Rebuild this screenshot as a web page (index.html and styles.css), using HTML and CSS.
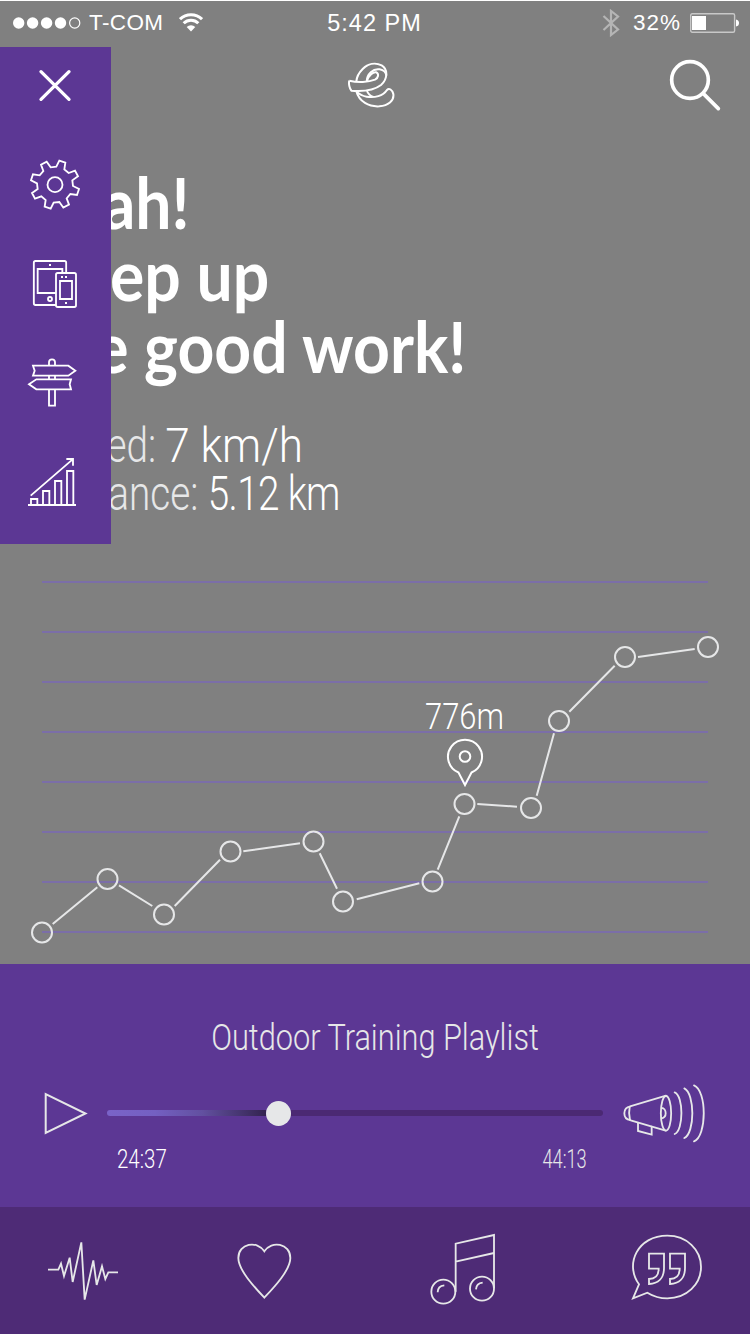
FILE: index.html
```html
<!DOCTYPE html>
<html lang="en">
<head>
    <meta charset="UTF-8">
    <meta name="viewport" content="width=device-width, initial-scale=1.0">
    <title>Training</title>
    <link rel="stylesheet" href="styles.css">
</head>
<body>
    <div class="app">
        <div class="status">
            <div class="status-left">
                <svg class="signal" width="68" height="12" viewBox="0 0 68 12">
                    <circle cx="5.7" cy="6" r="5.7"/><circle cx="19.6" cy="6" r="5.7"/><circle cx="33.6" cy="6" r="5.7"/><circle cx="47.5" cy="6" r="5.7"/>
                    <circle class="empty" cx="61.7" cy="6" r="5.1"/>
                </svg>
                <span class="carrier">T-COM</span>
                <svg class="wifi" width="24" height="19" viewBox="0 0 24 19">
                    <path d="M1 6.2a15.6 15.6 0 0 1 22 0M4.7 10.2a10.3 10.3 0 0 1 14.6 0"/>
                    <path class="tip" d="M12 18.5L7.7 14a6.2 6.2 0 0 1 8.6 0z"/>
                </svg>
            </div>
            <span class="time">5:42 PM</span>
            <div class="status-right">
                <svg class="bluetooth" width="18" height="28" viewBox="0 0 18 28"><path d="M1.5 7L16 20.500L9 26V2l7 5.500L1.500 21"/></svg>
                <span class="percent">32%</span>
                <svg class="battery" width="49" height="20" viewBox="0 0 49 20">
                    <rect class="case" x=".7" y=".7" width="43.900" height="18.600" rx="1.500"/>
                    <rect x="2" y="3" width="14" height="14"/>
                    <path d="M46 6.500q3 .5 3 3.500t-3 3.500z"/>
                </svg>
            </div>
        </div>

        <header class="header">
            <svg class="logo" width="48" height="46" viewBox="80 185 144 138">
                <path d="M87 241C84 250 88 264 93 271C130 274 160 271 182 254C203 236 203 206 184 195C165 186 143 190 127 206C115 218 109 231 108 243"/>
                <path d="M87 241C111 247 145 246 164 238C175 232 176 220 168 216C159 214 145 224 139 243"/>
                <path d="M139 243C140 221 158 204 178 207C190 209 197 216 198 226"/>
                <path d="M108 273C116 304 146 320 177 318C203 315 222 302 219 281C216 268 206 262 200 269C188 287 163 293 139 289C127 287 116 281 108 273M140 272Q145 285 159 290"/>
            </svg>
            <svg class="search" width="52" height="53" viewBox="1047 177 156 159">
                <circle cx="1110" cy="240" r="55"/><path d="M1150 281L1195 326"/>
            </svg>
        </header>

        <aside class="drawer">
            <svg class="close" width="111" height="83" viewBox="0 141 333 249"><path d="M123 215L207 298M207 215L123 298"/></svg>
            <svg width="111" height="103" viewBox="0 0 333 309">
                <path d="M169 110L178 92L196 98L193 118L206 129L225 122L234 139L217 151L219 168L237 177L231 195L211 192L200 205L207 224L190 233L178 216L161 218L152 236L134 230L137 210L124 199L105 206L96 189L113 177L111 160L93 151L99 133L119 136L130 123L123 104L140 95L152 112z"/>
                <circle cx="165" cy="164" r="22.500"/>
            </svg>
            <svg width="111" height="100" viewBox="0 309 333 300">
                <rect x="101.500" y="393" width="97" height="132" rx="5"/>
                <path d="M113 417H187V489H113z"/>
                <circle cx="150" cy="507" r="6"/>
                <rect class="front" x="168" y="429" width="60" height="102" rx="5"/>
                <path d="M180 453H216V507H180zM147 405h6M183 441h6M195 441h6M195 519h6"/>
            </svg>
            <svg width="111" height="100" viewBox="0 609 333 300">
                <path d="M147 706V697a9 9 0 0 1 18 0V706M147 738V747M165 738V747M147 780V827H165V780"/>
                <path d="M99 707H205L226 722L205 737H99L104 722zM213 748H109L87 763L109 778H213L209 763z"/>
            </svg>
            <svg width="111" height="111" viewBox="0 909 333 333">
                <path d="M84 1125H228M93 1125V1107H112V1125M129 1125V1083H148V1125M165 1125V1053H184V1125M201 1125V1023H220V1125M92 1097L218 988M199 987H219V1007"/>
            </svg>
        </aside>

        <section class="hero">
            <h1>
                <span class="line">Yeah!</span>
                <span class="line">Keep up</span>
                <span class="line">the good work!</span>
            </h1>
            <div class="stats">
                <p class="speed">Speed: <b>7 km/h</b></p>
                <p class="distance">Distance: <b>5.12 km</b></p>
            </div>
        </section>

        <svg class="chart" width="750" height="400" viewBox="0 564 750 400">
            <path class="grid" d="M42 582H708M42 632H708M42 682H708M42 732H708M42 782H708M42 832H708M42 882H708M42 932H708"/>
            <path class="route" d="M52.700 924L97.300 887.300M119 885.300L152.300 906M174.700 906L220 859.700M243.300 851.300L300 843.300M319.700 853.300L337 888.700M356.700 899.300L419.300 883.300M437.700 869.700L459.300 816.300M477.300 804L517 806.700M536.700 795.700L554 733.300M569.300 711.700L614.700 665.700M638 657L694.700 649"/>
            <g class="points">
                <circle cx="42" cy="932.500" r="10"/>
                <circle cx="107.500" cy="879" r="10"/>
                <circle cx="164" cy="914.500" r="10"/>
                <circle cx="230.500" cy="851.500" r="10"/>
                <circle cx="313.500" cy="841.500" r="10"/>
                <circle cx="343" cy="901.500" r="10"/>
                <circle cx="432.500" cy="881.500" r="10"/>
                <circle cx="464.500" cy="804" r="10"/>
                <circle cx="531" cy="808" r="10"/>
                <circle cx="559" cy="721" r="10"/>
                <circle cx="625" cy="657" r="10"/>
                <circle cx="708" cy="647" r="10"/>
            </g>
            <path class="pin" d="M465 785L458.500 772.500A17 17 0 1 1 471.500 772.500z"/>
            <circle class="pin" cx="465" cy="756.500" r="5.300"/>
            <text x="425" y="729" textLength="79" lengthAdjust="spacingAndGlyphs">776m</text>
        </svg>

        <section class="player">
            <h2>Outdoor Training Playlist</h2>
            <div class="controls">
                <svg class="play" width="44" height="44" viewBox="0 0 44 44"><path d="M1.700 3V42L41.500 22.500z"/></svg>
                <div class="track"><div class="played"></div><div class="knob"></div><div class="rest"></div></div>
                <svg class="volume" width="82" height="60" viewBox="744 370 246 180">
                    <path d="M765 440L873 408M767 482L872 513M766 440C754 442 748 448 748 461C748 472 754 480 766 481"/>
                    <path d="M764 442Q760 461 765 481"/>
                    <ellipse cx="873" cy="461" rx="15.500" ry="52"/>
                    <path d="M860 445C867 445 872 452 872 461S867 475 860 476M789 490V514L830 525V501M899 398C926 408 926 512 899 523M928 386C960 402 960 520 928 535M957 377C996 392 996 530 957 545"/>
                </svg>
            </div>
            <div class="times"><span>24:37</span><span class="total">44:13</span></div>
        </section>

        <nav class="tabs">
            <svg width="70" height="62" viewBox="144 120 210 186"><path d="M144 209H175L183 191L192 228L209 173L218 246L244 127L254 299L280 181L290 255L306 199L316 237L325 217H354"/></svg>
            <svg class="heart" width="55" height="58" viewBox="711 126 165 174"><path d="M793 154C772 120 715 130 715 174C715 210 763 261 793 293C823 261 871 210 871 174C871 130 814 120 793 154z"/></svg>
            <svg class="music" width="66" height="72" viewBox="163 98 198 216">
                <path d="M240 274V130L355 104V264M240 184L355 158M186 276Q186 257 206 255M301 267Q302 249 321 247"/>
                <circle cx="203" cy="274" r="36"/><circle cx="319" cy="265" r="36"/>
            </svg>
            <svg class="quote" width="72" height="66" viewBox="768 103 216 198">
                <path d="M792 254C748 193 788 108 877 108C935 108 978 150 978 202S935 296 877 296C855 296 835 290 817 279L774 296z"/>
                <path d="M822 162H867V205C867 235 850 252 822 253V238C841 238 851 227 851 207H822zM885 162H930V205C930 235 913 252 885 253V238C904 238 914 227 914 207H885z"/>
            </svg>
        </nav>
    </div>
</body>
</html>
```

FILE: styles.css
```css
* {
    box-sizing: border-box;
}
body {
    margin: 0;
    background-color: #808080;
    color: #fff;
    font-family: Roboto, "Open Sans", sans-serif;
}
svg {
    display: block;
    flex: none;
    fill: none;
    stroke: #fff;
}
.app {
    position: relative;
    width: 750px;
    height: 1334px;
    overflow: hidden;
    background-color: #808080;
}
.status {
    display: grid;
    grid-template-columns: 1fr auto 1fr;
    align-items: center;
    height: 47px;
    padding: 0 11px 3px 13px;
    border-top: 1px solid #fff;
    font: 22.5px "Liberation Sans", sans-serif;
    letter-spacing: 1px;
}
.status-left, .status-right {
    display: flex;
    align-items: center;
}
.status-right {
    justify-content: flex-end;
}
.signal, .wifi .tip, .battery {
    fill: #fff;
    stroke: none;
}
.signal .empty {
    fill: none;
    stroke: #fff;
    stroke-width: 1.2;
}
.carrier {
    margin: 0 15px 0 8px;
    letter-spacing: .4px;
}
.wifi {
    stroke-width: 3;
}
.time {
    margin: 1px 3px 0 0;
    font-size: 23.5px;
}
.bluetooth {
    margin-right: 13px;
    stroke: #b5b5b5;
    stroke-width: 2.2;
}
.percent {
    margin-right: 9px;
}
.battery .case {
    fill: none;
    stroke: #c8c8c8;
    stroke-width: 1.4;
}
.header {
    display: flex;
    justify-content: space-between;
    align-items: flex-start;
    height: 83px;
    padding: 12px 29px 0 347px;
}
.logo {
    margin-top: 3px;
    stroke-width: 6;
    stroke-linejoin: round;
}
.search {
    stroke-width: 11;
    stroke-linecap: round;
}
.drawer {
    position: absolute;
    top: 47px;
    left: 0;
    z-index: 2;
    width: 111px;
    height: 497px;
    background-color: #5c3794;
}
.drawer svg {
    stroke-width: 5.5;
}
.drawer .close {
    stroke-width: 10;
    stroke-linecap: round;
}
.drawer .front {
    fill: #5c3794;
}
.hero {
    height: 434px;
    padding: 36px 0 0 34px;
}
h1 {
    margin: 0;
    font: 700 70px/72px Lato, sans-serif;
}
.line, .stats p {
    display: block;
    width: max-content;
    transform-origin: left;
    white-space: nowrap;
}
.line {
    transform: scaleX(.918);
}
.stats {
    margin: 40px 0 0 8px;
}
.stats p {
    margin: 0;
    color: #e6e7e8;
    font-size: 49px;
    font-weight: 300;
    line-height: 48px;
    transform: scaleX(.79);
}
.stats b {
    color: #fff;
    font-weight: 300;
}
.speed b {
    display: inline-block;
    transform: scaleX(1.14);
    transform-origin: left;
}
.distance b {
    letter-spacing: -.8px;
}
.chart {
    stroke-width: 2;
}
.grid {
    stroke: #7b6ea8;
}
.route, .points {
    stroke: #e6e7e8;
}
.chart text {
    fill: #fff;
    stroke: none;
    font-size: 36px;
    font-weight: 300;
}
.player {
    height: 243px;
    padding-top: 50px;
    background-color: #5c3794;
    color: #e6e7e8;
}
.player svg, .tabs svg {
    stroke: #e6e7e8;
}
h2 {
    margin: 0;
    font-size: 37px;
    font-weight: 300;
    line-height: 48px;
    text-align: center;
    transform: scaleX(.83);
}
.controls {
    display: flex;
    align-items: center;
    height: 60px;
    margin-top: 21px;
    padding-left: 44px;
}
.play {
    stroke-width: 2;
}
.track {
    display: flex;
    align-items: center;
    width: 496px;
    margin: 0 20px 0 19px;
}
.played, .rest {
    height: 6px;
}
.played {
    width: 159px;
    border-radius: 3px 0 0 3px;
    background: linear-gradient(to right, #7a63c8, #7460c2 30%, #6250a0 60%, #33234f);
}
.knob {
    width: 25px;
    height: 25px;
    border-radius: 50%;
    background-color: #e6e7e8;
}
.rest {
    flex: 1;
    border-radius: 0 3px 3px 0;
    background-color: #4b2973;
}
.volume {
    stroke-width: 5.5;
    stroke-linecap: round;
}
.times {
    display: flex;
    justify-content: space-between;
    width: 470px;
    margin: 2px 0 0 117px;
    color: #fff;
    font-size: 25px;
    font-weight: 300;
    line-height: 30px;
}
.times span {
    transform: scaleX(.82);
    transform-origin: left;
}
.times .total {
    color: #e6e7e8;
    transform: scaleX(.73);
    transform-origin: right;
}
.tabs {
    display: flex;
    align-items: flex-start;
    height: 127px;
    padding: 33px 0 0 48px;
    background-color: #4e2b76;
}
.tabs svg {
    stroke-width: 5.5;
}
.tabs .heart {
    margin: 2px 0 0 119px;
}
.tabs .music {
    margin: -7px 0 0 138px;
}
.tabs .quote {
    margin: -6px 0 0 135px;
}
```
